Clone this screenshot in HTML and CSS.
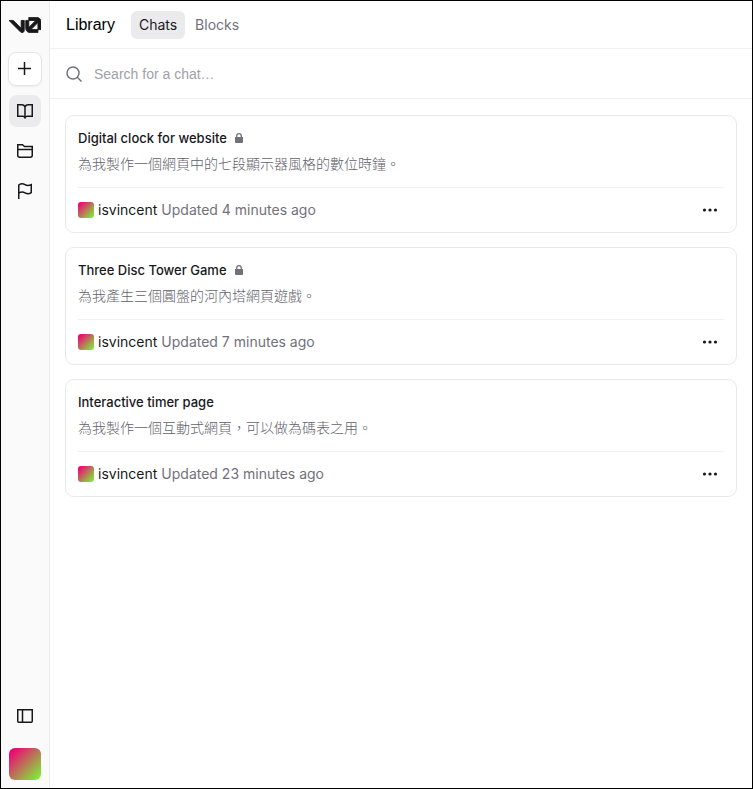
FILE: index.html
```html
<!DOCTYPE html>
<html lang="en">
<head>
<meta charset="utf-8">
<meta name="viewport" content="width=device-width, initial-scale=1">
<title>Library</title>
<link rel="stylesheet" href="styles.css">
</head>
<body>
<div class="app">
  <aside class="sidebar">
    <a class="logo" href="#" aria-label="v0">
      <svg viewBox="0 0 147 70" width="32" height="16" fill="currentColor" stroke="currentColor" stroke-width="4"><path d="M56 50.2031V14H70V60.1562C70 65.5928 65.5928 70 60.1562 70C57.5605 70 54.9982 68.9992 53.1562 67.1573L0 14H19.7969L56 50.2031Z"/><path d="M147 56H133V23.9531L100.953 56H133V70H96.6875C85.8144 70 77 61.1856 77 50.3125V14H91V46.1562L123.156 14H91V0H127.312C138.186 0 147 8.81439 147 19.6875V56Z"/></svg>
    </a>
    <button class="new-chat" type="button" aria-label="New chat">
      <svg viewBox="0 0 16 16" width="16" height="16" fill="none" stroke="currentColor" stroke-width="1.5"><path d="M7.500 1v13M1 7.500h13"/></svg>
    </button>
    <nav class="nav">
      <a class="nav-item active" href="#" aria-label="Library">
        <svg viewBox="0 0 16 16" width="16" height="16" fill="none" stroke="currentColor" stroke-width="1.5"><path d="M8 3.800C7.400 2.600 6.400 1.750 5 1.750H.75v11.500H5.800c1 0 1.700.4 2.200 1.500.5-1.100 1.200-1.500 2.200-1.500h5.050V1.750H11C9.600 1.750 8.600 2.600 8 3.800ZM8 3.800V14.500"/></svg>
      </a>
      <a class="nav-item" href="#" aria-label="Projects">
        <svg viewBox="0 0 16 16" width="16" height="16" fill="none" stroke="currentColor" stroke-width="1.5"><path d="M.75 6.500V1.750H5.500L7.500 3.500H15.250V6.500M.75 6.500h14.500v5.750a2 2 0 0 1-2 2H2.750a2 2 0 0 1-2-2Z"/></svg>
      </a>
      <a class="nav-item" href="#" aria-label="Feedback">
        <svg viewBox="0 0 16 16" width="16" height="16" fill="none" stroke="currentColor" stroke-width="1.5"><path d="M1.750 16V2C4 .4 6 .4 8 1.700s4 1.200 6.250 0v8C12 11.200 10 11 8 9.800s-4-1.200-6.250.3"/></svg>
      </a>
    </nav>
    <button class="nav-item toggle" type="button" aria-label="Toggle sidebar">
      <svg viewBox="0 0 16 16" width="16" height="16" fill="none" stroke="currentColor" stroke-width="1.5"><path d="M.75 1.750h14.500v11.500a1 1 0 0 1-1 1H1.750a1 1 0 0 1-1-1ZM5.500 2v12"/></svg>
    </button>
    <button class="avatar account" type="button" aria-label="Account"></button>
  </aside>
  <main class="main">
    <header class="header">
      <h1 class="heading">Library</h1>
      <nav class="tabs">
        <a class="tab selected" href="#">Chats</a>
        <a class="tab" href="#">Blocks</a>
      </nav>
    </header>
    <label class="search">
      <svg viewBox="0 0 16 16" width="16" height="16" fill="none" stroke="currentColor" stroke-width="1.5"><circle cx="7" cy="7" r="6"/><path d="m11.300 11.300 4.200 4.200"/></svg>
      <input class="search-input" type="text" placeholder="Search for a chat…" aria-label="Search for a chat">
    </label>
    <section class="chats">
      <article class="card">
        <div class="summary">
          <h2 class="title">Digital clock for website <svg class="lock" viewBox="0 0 8 10" width="8" height="10"><path fill="currentColor" d="M0 4h8v5a1 1 0 0 1-1 1H1a1 1 0 0 1-1-1Z"/><path fill="none" stroke="currentColor" stroke-width="1.300" d="M1.700 4.500V3a2.300 2.300 0 0 1 4.600 0v1.500"/></svg></h2>
          <p class="prompt" lang="zh-Hant">為我製作一個網頁中的七段顯示器風格的數位時鐘。</p>
        </div>
        <footer class="meta">
          <span class="avatar"></span><span class="author">isvincent</span><span class="time">Updated 4 minutes ago</span>
          <button class="more" type="button" aria-label="More"><svg viewBox="0 0 16 16" width="16" height="16" fill="currentColor"><circle cx="2.500" cy="8" r="1.600"/><circle cx="8" cy="8" r="1.600"/><circle cx="13.500" cy="8" r="1.600"/></svg></button>
        </footer>
      </article>
      <article class="card">
        <div class="summary">
          <h2 class="title">Three Disc Tower Game <svg class="lock" viewBox="0 0 8 10" width="8" height="10"><path fill="currentColor" d="M0 4h8v5a1 1 0 0 1-1 1H1a1 1 0 0 1-1-1Z"/><path fill="none" stroke="currentColor" stroke-width="1.300" d="M1.700 4.500V3a2.300 2.300 0 0 1 4.600 0v1.500"/></svg></h2>
          <p class="prompt" lang="zh-Hant">為我產生三個圓盤的河內塔網頁遊戲。</p>
        </div>
        <footer class="meta">
          <span class="avatar"></span><span class="author">isvincent</span><span class="time">Updated 7 minutes ago</span>
          <button class="more" type="button" aria-label="More"><svg viewBox="0 0 16 16" width="16" height="16" fill="currentColor"><circle cx="2.500" cy="8" r="1.600"/><circle cx="8" cy="8" r="1.600"/><circle cx="13.500" cy="8" r="1.600"/></svg></button>
        </footer>
      </article>
      <article class="card">
        <div class="summary">
          <h2 class="title">Interactive timer page</h2>
          <p class="prompt" lang="zh-Hant">為我製作一個互動式網頁，可以做為碼表之用。</p>
        </div>
        <footer class="meta">
          <span class="avatar"></span><span class="author">isvincent</span><span class="time">Updated 23 minutes ago</span>
          <button class="more" type="button" aria-label="More"><svg viewBox="0 0 16 16" width="16" height="16" fill="currentColor"><circle cx="2.500" cy="8" r="1.600"/><circle cx="8" cy="8" r="1.600"/><circle cx="13.500" cy="8" r="1.600"/></svg></button>
        </footer>
      </article>
    </section>
  </main>
</div>
</body>
</html>
```
FILE: styles.css
```css
* { box-sizing: border-box; }
body {
  margin: 0;
  background: #fff;
  color: #18181b;
  font: 14px/20px Inter, "Noto Sans CJK TC", sans-serif;
}
h1, h2, p { margin: 0; }
a { color: inherit; text-decoration: none; }
button { border: 0; padding: 0; background: none; color: inherit; font: inherit; cursor: pointer; }
svg { display: block; flex: none; }

.app { display: flex; min-height: 100vh; border: 1px solid #000; }

.sidebar {
  display: flex;
  flex: none;
  flex-direction: column;
  align-items: center;
  width: 49px;
  padding: 16px 9px 8px 8px;
  border-right: 1px solid #ebebed;
  background: #fafafa;
}
.new-chat {
  display: grid;
  place-items: center;
  width: 34px;
  height: 34px;
  margin: 19px 0 9px;
  border: 1px solid #e4e4e7;
  border-radius: 8px;
  background: #fff;
  box-shadow: 0 1px 2px #0000000d;
}
.nav { display: flex; flex-direction: column; gap: 8px; }
.nav-item { display: grid; place-items: center; width: 32px; height: 32px; border-radius: 8px; }
.nav-item.active { background: #ebebed; }
.toggle { margin-top: auto; }

.avatar {
  width: 16px;
  height: 16px;
  border-radius: 3px;
  background: linear-gradient(135deg, #f10075 8%, #77ff33 100%);
}
.account { width: 32px; height: 32px; margin-top: 16px; border-radius: 6px; }

.main { flex: 1; min-width: 0; }
.header {
  display: flex;
  align-items: center;
  gap: 16px;
  height: 48px;
  padding: 0 16px;
  border-bottom: 1px solid #f0f0f1;
}
.heading { font: 400 16px/24px "Liberation Sans", sans-serif; color: #000; }
.tabs { display: flex; gap: 2px; }
.tab { padding: 4px 8px; border-radius: 6px; color: #71717a; }
.tab.selected { background: #ebebed; color: #18181b; }

.search {
  display: flex;
  align-items: center;
  gap: 12px;
  height: 50px;
  padding: 0 16px;
  border-bottom: 1px solid #f0f0f1;
  color: #71717a;
}
.search-input {
  flex: 1;
  min-width: 0;
  padding: 0;
  border: 0;
  outline: 0;
  background: none;
  font: 14px/20px "Liberation Sans", sans-serif;
}
.search-input::placeholder { color: #a1a1aa; }

.chats { display: grid; gap: 14px; padding: 16px 15px; }
.card { padding: 0 12px; border: 1px solid #e8e8ea; border-radius: 9px; }
.summary { height: 72px; padding: 12px 0; border-bottom: 1px solid #f0f0f1; }
.title { display: flex; align-items: center; gap: 8px; font-size: 13px; font-weight: 500; line-height: 20px; }
.lock { color: #71717a; }
.prompt { margin-top: 5px; color: #62626b; font-family: "Noto Sans CJK TC", sans-serif; font-weight: 300; }
.meta { display: flex; align-items: center; gap: 4px; height: 44px; }
.time { color: #71717a; }
.more { display: grid; place-items: center; width: 28px; height: 28px; margin-left: auto; }
```
